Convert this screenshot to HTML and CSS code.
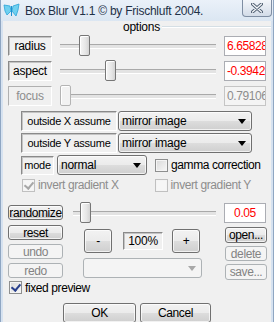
FILE: index.html
```html
<!DOCTYPE html>
<html lang="en">
<head>
    <meta charset="UTF-8">
    <meta name="viewport" content="width=device-width, initial-scale=1.0">
    <title>Box Blur V1.1</title>
    <link rel="stylesheet" href="styles.css">
</head>
<body>
    <div class="window">
        <div class="titlebar">
            <svg class="app-icon" width="17" height="15" viewBox="0 0 17 15">
                <path d="M1 2 L7 3 L8 8 L4 12 L2 8 Z" fill="#6fd0f0" stroke="#2aa3d8" stroke-width="0.8"/>
                <path d="M16 1 L10 3 L9 8 L13 13 L15 7 Z" fill="#6fd0f0" stroke="#2aa3d8" stroke-width="0.8"/>
                <path d="M8 3 L9 3 L9 13 L8 13 Z" fill="#1e8fcf"/>
            </svg>
            <span class="title">Box Blur V1.1 © by Frischluft 2004.</span>
            <div class="close-btn">
                <svg width="12" height="10" viewBox="0 0 12 10">
                    <path d="M1.5 1 L10.5 9 M10.5 1 L1.5 9" stroke="#4d5d70" stroke-width="3.2" stroke-linecap="round"/>
                    <path d="M1.5 1 L10.5 9 M10.5 1 L1.5 9" stroke="#f4f6f9" stroke-width="1.4" stroke-linecap="round"/>
                </svg>
            </div>
        </div>

        <div class="client">
            <div class="group-head"><span>options</span><i class="rule"></i></div>

            <div class="param-row first">
                <div class="tag">radius</div>
                <div class="slider"><span class="thumb" style="left: 21px"></span></div>
                <div class="value">6.65828</div>
            </div>
            <div class="param-row">
                <div class="tag">aspect</div>
                <div class="slider"><span class="thumb" style="left: 47px"></span></div>
                <div class="value">-0.3942</div>
            </div>
            <div class="param-row disabled">
                <div class="tag">focus</div>
                <div class="slider"><span class="thumb" style="left: 2px"></span></div>
                <div class="value">0.79106</div>
            </div>

            <div class="select-row first">
                <div class="tag wide">outside X assume</div>
                <div class="dropdown long">mirror image<i class="arrow"></i></div>
            </div>
            <div class="select-row">
                <div class="tag wide">outside Y assume</div>
                <div class="dropdown long">mirror image<i class="arrow"></i></div>
            </div>
            <div class="select-row">
                <div class="tag short">mode</div>
                <div class="dropdown mid">normal<i class="arrow"></i></div>
                <label class="check gamma"><span class="box"></span>gamma correction</label>
            </div>

            <div class="invert-row">
                <label class="check disabled"><span class="box checked"></span>invert gradient X</label>
                <label class="check disabled right"><span class="box"></span>invert gradient Y</label>
            </div>

            <div class="random-row">
                <button class="btn small">randomize</button>
                <div class="slider random"><span class="thumb" style="left: 9px"></span></div>
                <div class="value center">0.05</div>
            </div>

            <div class="tools">
                <div class="col left">
                    <button class="btn small">reset</button>
                    <button class="btn small" disabled>undo</button>
                    <button class="btn small" disabled>redo</button>
                </div>
                <div class="col middle">
                    <div class="zoom-row">
                        <button class="btn zoom-btn">-</button>
                        <div class="zoom-box">100%</div>
                        <button class="btn zoom-btn">+</button>
                    </div>
                    <div class="dropdown preset disabled"><i class="arrow"></i></div>
                </div>
                <div class="col right">
                    <button class="btn file">open...</button>
                    <button class="btn file" disabled>delete</button>
                    <button class="btn file" disabled>save...</button>
                </div>
            </div>

            <label class="check fixed"><span class="box checked"></span>fixed preview</label>

            <div class="dialog-buttons">
                <button class="btn big ok">OK</button>
                <button class="btn big">Cancel</button>
            </div>
        </div>
    </div>
</body>
</html>
```

FILE: styles.css
```css
* {
    box-sizing: border-box;
}

body {
    margin: 0;
    font-family: "Liberation Sans", Arial, sans-serif;
    font-size: 11px;
    letter-spacing: -0.25px;
    color: #000;
    background: #fff;
}

.window {
    width: 274px;
    height: 322px;
    overflow: hidden;
    background: #d6e2f0;
    border-left: 1px solid #8fa6c2;
    border-right: 1px solid #8fa6c2;
}

/* title bar */
.titlebar {
    height: 21px;
    display: flex;
    align-items: center;
    background: linear-gradient(#eaf1f9, #dbe6f2);
}

.app-icon {
    margin: 0 5px 0 2px;
}

.title {
    font-size: 12px;
    letter-spacing: -0.25px;
    color: #1f3147;
    flex: 1;
    white-space: nowrap;
}

.close-btn {
    align-self: flex-start;
    width: 30px;
    height: 17px;
    margin-right: 1px;
    border: 1px solid #7f8ea3;
    border-top: none;
    border-radius: 0 0 4px 4px;
    background: linear-gradient(#f3f6fa, #d3dce8);
    display: flex;
    align-items: center;
    justify-content: center;
}

/* client area */
.client {
    margin: 0 2px;
    height: 301px;
    background: #f0f0f0;
    padding: 0 4px 0 5px;
}

.group-head {
    height: 12px;
    display: flex;
    align-items: center;
    padding-left: 115px;
    font-size: 12px;
}

.group-head span {
    padding: 0 2px 0 0;
}

.rule {
    flex: 1;
    height: 2px;
    border-top: 1px solid #d5dfe5;
    border-bottom: 1px solid #fff;
    margin-right: -4px;
}

.param-row {
    display: flex;
    align-items: center;
    height: 21px;
    margin-top: 4px;
}

.param-row.first {
    margin-top: 2px;
}

.tag {
    width: 44px;
    height: 20px;
    border: 1px solid;
    border-color: #8a8a8a #fff #fff #8a8a8a;
    box-shadow: inset 1px 1px 0 #c4c4c4;
    display: flex;
    align-items: center;
    justify-content: center;
    white-space: nowrap;
    font-size: 12px;
}

.slider {
    position: relative;
    width: 162px;
    height: 21px;
    margin: 0 4px 0 6px;
}

.slider::before {
    content: "";
    position: absolute;
    left: 2px;
    right: 4px;
    top: 9px;
    height: 3px;
    border-top: 1px solid #a9a9a9;
    border-bottom: 1px solid #fff;
    background: #e3e3e3;
}

.thumb {
    position: absolute;
    top: 0;
    width: 11px;
    height: 21px;
    border: 1px solid #767676;
    border-radius: 2px;
    background: linear-gradient(90deg, #f6f6f6, #e6e6e6 60%, #d4d4d4);
    box-shadow: inset 1px 1px 0 #fff;
}

.value {
    width: 42px;
    height: 20px;
    background: #fff;
    border: 1px solid #abadb3;
    color: #f00;
    overflow: hidden;
    white-space: nowrap;
    padding-left: 2px;
    line-height: 18px;
    font-size: 12px;
    letter-spacing: -0.4px;
}

.value.center {
    text-align: center;
    padding-left: 0;
}

.disabled .tag,
.disabled .value,
.check.disabled {
    color: #8d8d8d;
}

.disabled .tag {
    border-color: #b0b0b0 #fff #fff #b0b0b0;
    box-shadow: none;
}

.disabled .value {
    background: #f4f4f4;
    border-color: #c5c5c5;
}

.disabled .thumb {
    border-color: #b4b4b4;
    background: #f2f2f2;
}

/* dropdown rows */
.select-row {
    display: flex;
    align-items: center;
    height: 20px;
    margin-top: 2px;
    padding-left: 13px;
}

.select-row.first {
    margin-top: 5px;
}

.tag.wide {
    width: 96px;
    height: 20px;
    font-size: 11px;
}

.tag.short {
    width: 33px;
    height: 19px;
    font-size: 11px;
}

.dropdown {
    position: relative;
    height: 20px;
    border: 1px solid #707070;
    border-radius: 3px;
    background: linear-gradient(#f2f2f2 0%, #ebebeb 50%, #dddddd 51%, #cfcfcf 100%);
    box-shadow: inset 0 0 0 1px rgba(255, 255, 255, 0.7);
    padding-left: 3px;
    line-height: 18px;
    white-space: nowrap;
    font-size: 12px;
}

.dropdown.long {
    width: 134px;
    margin-left: 1px;
}

.dropdown.mid {
    width: 90px;
    margin-left: 3px;
}

.arrow {
    position: absolute;
    right: 5px;
    top: 7px;
    width: 0;
    height: 0;
    border-left: 4px solid transparent;
    border-right: 4px solid transparent;
    border-top: 5px solid #000;
}

.dropdown.disabled {
    border-color: #adb2b5;
    background: #f4f4f4;
    box-shadow: none;
}

.dropdown.disabled .arrow {
    border-top-color: #a8a8a8;
}

/* checkboxes */
.check {
    display: flex;
    align-items: center;
    white-space: nowrap;
    font-size: 12px;
    letter-spacing: -0.4px;
}

.box {
    width: 13px;
    height: 13px;
    margin-right: 3px;
    border: 1px solid #8e8f8f;
    background: linear-gradient(135deg, #d8d8d8, #f8f8f8);
    box-shadow: inset 0 0 0 1px #f4f4f4;
    position: relative;
}

.box.checked::after {
    content: "";
    position: absolute;
    left: 3px;
    top: 0px;
    width: 4px;
    height: 7px;
    border-right: 2px solid #283f8c;
    border-bottom: 2px solid #283f8c;
    transform: rotate(40deg);
}

.check.disabled .box {
    border-color: #c0c0c0;
    background: #f6f6f6;
}

.check.disabled .box.checked::after {
    border-color: #a7a7a7;
}

.gamma {
    margin-left: 8px;
}

.invert-row {
    display: flex;
    align-items: center;
    height: 14px;
    margin-top: 3px;
    padding-left: 14px;
}

.check.right {
    margin-left: 36px;
}

/* buttons */
.btn {
    font-family: inherit;
    font-size: 12px;
    letter-spacing: -0.4px;
    color: #000;
    padding: 0;
    border: 1px solid #707070;
    border-radius: 3px;
    background: linear-gradient(#f2f2f2 0%, #ebebeb 50%, #dddddd 51%, #cfcfcf 100%);
    box-shadow: inset 0 0 0 1px rgba(255, 255, 255, 0.7);
    line-height: 1;
}

.btn:disabled {
    color: #838383;
    border-color: #adb2b5;
    background: #f4f4f4;
    box-shadow: none;
}

.btn.small {
    width: 55px;
    height: 15px;
}

.random-row {
    display: flex;
    align-items: center;
    height: 21px;
    margin-top: 10px;
}

.slider.random {
    width: 149px;
    margin: 0 4px 0 8px;
}

.tools {
    display: flex;
    height: 55px;
    margin-top: 2px;
}

.col {
    display: flex;
    flex-direction: column;
}

.col.left {
    width: 55px;
    gap: 4px;
}

.col.middle {
    width: 119px;
    margin-left: 20px;
}

.zoom-row {
    display: flex;
    align-items: center;
    height: 24px;
    margin-top: 4px;
}

.btn.zoom-btn {
    width: 28px;
    height: 24px;
    margin-left: 1px;
}

.zoom-box {
    width: 40px;
    height: 18px;
    margin: 0 8px 0 11px;
    border: 1px solid;
    border-color: #8a8a8a #fff #fff #8a8a8a;
    box-shadow: inset 1px 1px 0 #c4c4c4;
    display: flex;
    align-items: center;
    justify-content: center;
    font-size: 12px;
}

.dropdown.preset {
    width: 119px;
    margin-top: 5px;
}

.col.right {
    width: 42px;
    margin-left: 23px;
    padding-top: 2px;
    gap: 3px;
}

.btn.file {
    width: 42px;
    height: 16px;
}

.fixed {
    height: 13px;
    margin: 1px 0 0 1px;
}

.dialog-buttons {
    display: flex;
    margin: 9px 0 0 55px;
    gap: 4px;
}

.btn.big {
    width: 71px;
    height: 20px;
}

.btn.ok {
    width: 73px;
}
```
